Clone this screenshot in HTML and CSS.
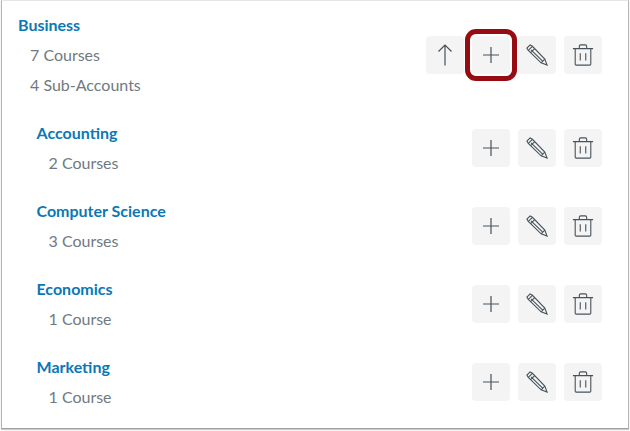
FILE: index.html
```html
<!DOCTYPE html>
<html lang="en">
<head>
  <meta charset="UTF-8">
  <title>Sub-Accounts</title>
  <link rel="stylesheet" href="styles.css">
</head>
<body>
  <svg class="sprites" width="0" height="0">
    <symbol id="up" viewBox="0 0 22 22">
      <path d="M11 21.500V1M4.500 7.500 11 1 17.500 7.500"/>
    </symbol>
    <symbol id="plus" viewBox="0 0 22 22">
      <path d="M11 3v16M3 11h16"/>
    </symbol>
    <symbol id="pencil" viewBox="0 0 24 24">
      <path d="M4.500 1 1 4.500 2.500 7 16.500 20.500 23 23 20.500 16.500 7 2.500Z"/>
      <path d="M2.500 7 7 2.500M5 9.500 9.500 5M5.500 6.500 18.500 19M16.500 20.500 20.500 16.500"/>
    </symbol>
    <symbol id="trash" viewBox="0 0 24 24">
      <path d="M1 5h22M3.500 5v17a1 1 0 0 0 1 1h15a1 1 0 0 0 1-1V5M8 5V2.500A1.500 1.500 0 0 1 9.500 1h5A1.500 1.500 0 0 1 16 2.500V5M9 10v8M15 10v8"/>
    </symbol>
  </svg>

  <div class="frame">
    <!-- Parent account -->
    <div class="account account-parent">
      <div class="info">
        <a class="name" href="#">Business</a>
        <div class="meta">7 Courses</div>
        <div class="meta">4 Sub-Accounts</div>
      </div>
      <div class="actions">
        <button class="btn"><svg class="icon"><use href="#up"/></svg></button>
        <button class="btn btn-active"><svg class="icon"><use href="#plus"/></svg></button>
        <button class="btn"><svg class="icon"><use href="#pencil"/></svg></button>
        <button class="btn"><svg class="icon"><use href="#trash"/></svg></button>
      </div>
    </div>

    <!-- Sub-accounts -->
    <div class="account account-child">
      <div class="info">
        <a class="name" href="#">Accounting</a>
        <div class="meta">2 Courses</div>
      </div>
      <div class="actions">
        <button class="btn"><svg class="icon"><use href="#plus"/></svg></button>
        <button class="btn"><svg class="icon"><use href="#pencil"/></svg></button>
        <button class="btn"><svg class="icon"><use href="#trash"/></svg></button>
      </div>
    </div>

    <div class="account account-child">
      <div class="info">
        <a class="name" href="#">Computer Science</a>
        <div class="meta">3 Courses</div>
      </div>
      <div class="actions">
        <button class="btn"><svg class="icon"><use href="#plus"/></svg></button>
        <button class="btn"><svg class="icon"><use href="#pencil"/></svg></button>
        <button class="btn"><svg class="icon"><use href="#trash"/></svg></button>
      </div>
    </div>

    <div class="account account-child">
      <div class="info">
        <a class="name" href="#">Economics</a>
        <div class="meta">1 Course</div>
      </div>
      <div class="actions">
        <button class="btn"><svg class="icon"><use href="#plus"/></svg></button>
        <button class="btn"><svg class="icon"><use href="#pencil"/></svg></button>
        <button class="btn"><svg class="icon"><use href="#trash"/></svg></button>
      </div>
    </div>

    <div class="account account-child">
      <div class="info">
        <a class="name" href="#">Marketing</a>
        <div class="meta">1 Course</div>
      </div>
      <div class="actions">
        <button class="btn"><svg class="icon"><use href="#plus"/></svg></button>
        <button class="btn"><svg class="icon"><use href="#pencil"/></svg></button>
        <button class="btn"><svg class="icon"><use href="#trash"/></svg></button>
      </div>
    </div>
  </div>
</body>
</html>
```

FILE: styles.css
```css
* {
  margin: 0;
  padding: 0;
  box-sizing: border-box;
}

html, body {
  height: 100%;
  overflow: hidden;
}

body {
  background-color: #ffffff;
  font-family: "Lato", sans-serif;
  padding: 0 1px 2px 1px;
}

.sprites {
  position: absolute;
}

/* Screenshot frame */
.frame {
  height: 100%;
  border-top: 1px solid #e6e6e6;
  border-left: 1px solid #b4b4b4;
  border-right: 1px solid #b4b4b4;
  border-bottom: 1px solid #a0a0a0;
  box-shadow: 0 1px 1px rgba(0, 0, 0, 0.2);
  padding: 9px 26px 0 16px;
}

.account {
  display: flex;
  justify-content: space-between;
  align-items: center;
  margin-bottom: 18px;
}

.account-child {
  padding-left: 18.5px;
}

.name {
  display: block;
  color: #0b78b5;
  font-size: 16px;
  font-weight: 700;
  line-height: 30px;
  text-decoration: none;
}

.meta {
  color: #6f7a81;
  font-size: 16px;
  line-height: 30px;
  padding-left: 12px;
}

/* Action buttons */
.actions {
  display: flex;
  gap: 8px;
}

.btn {
  display: flex;
  align-items: center;
  justify-content: center;
  width: 38px;
  height: 38px;
  background-color: #f4f4f4;
  border: none;
  border-radius: 4px;
}

.btn-active {
  outline: 5px solid #960c12;
  outline-offset: 2px;
}

.icon {
  width: 22px;
  height: 22px;
  fill: none;
  stroke: #47535b;
  stroke-width: 1.2;
}
```
